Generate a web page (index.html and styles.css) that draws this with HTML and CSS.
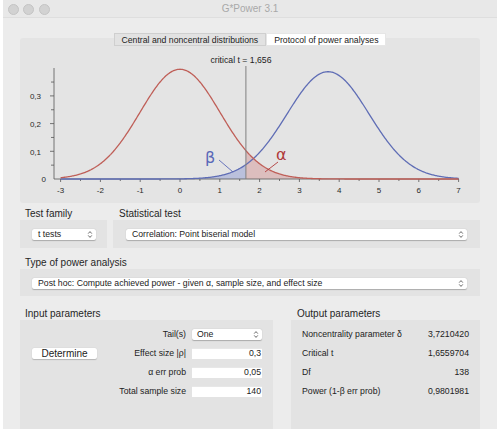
FILE: index.html
```html
<!DOCTYPE html>
<html>
<head>
<meta charset="utf-8">
<title>G*Power 3.1</title>
<link rel="stylesheet" href="styles.css">
</head>
<body>
<div class="window">
  <div class="titlebar">
    <div class="lights"><span></span><span></span><span></span></div>
    <div class="title">G*Power 3.1</div>
    <div></div>
  </div>
  <div class="content">
    <div class="tabs">
      <div class="tab">Central and noncentral distributions</div>
      <div class="tab active">Protocol of power analyses</div>
    </div>
    <div class="chart-panel">
      <svg class="chart" width="460" height="165" viewBox="20 38 460 165">
        <path id="betaFill" class="beta-fill" d=""/>
        <path id="alphaFill" class="alpha-fill" d=""/>
        <line class="axis" x1="54" y1="68" x2="54" y2="179"/>
        <line class="axis" x1="54" y1="179" x2="459" y2="179"/>
        <path id="ticks" class="axis" d=""/>
        <path id="blue" class="curve-blue" d=""/>
        <path id="red" class="curve-red" d=""/>
        <line class="crit" x1="245.9" y1="66" x2="245.9" y2="179"/>
        <text class="crit-label" x="241" y="63" text-anchor="middle">critical t = 1,656</text>
        <g class="ylabels" text-anchor="end">
          <text x="41" y="99">0,3</text>
          <text x="41" y="127">0,2</text>
          <text x="41" y="155">0,1</text>
          <text x="46" y="182">0</text>
        </g>
        <g class="xlabels" text-anchor="middle">
          <text x="60.6" y="193">-3</text>
          <text x="100.4" y="193">-2</text>
          <text x="140.2" y="193">-1</text>
          <text x="180" y="193">0</text>
          <text x="219.8" y="193">1</text>
          <text x="259.6" y="193">2</text>
          <text x="299.4" y="193">3</text>
          <text x="339.2" y="193">4</text>
          <text x="379" y="193">5</text>
          <text x="418.8" y="193">6</text>
          <text x="458.6" y="193">7</text>
        </g>
        <text class="greek beta" x="205" y="163">β</text>
        <line class="lead-beta" x1="219" y1="160" x2="233" y2="172"/>
        <text class="greek alpha" x="276" y="160">α</text>
        <line class="lead-alpha" x1="278" y1="162" x2="265" y2="172"/>
      </svg>
    </div>

    <div class="row-top">
      <div class="col col-family">
        <div class="section-label">Test family</div>
        <div class="group group-family">
          <div class="select">
            <span>t tests</span>
            <svg class="chev" width="6" height="9" viewBox="0 0 6 9"><path d="M1.2 3.6 L3 1.6 L4.8 3.6 M1.2 5.4 L3 7.4 L4.8 5.4"/></svg>
          </div>
        </div>
      </div>
      <div class="col col-stat">
        <div class="section-label label-stat">Statistical test</div>
        <div class="group group-stat">
          <div class="select">
            <span>Correlation: Point biserial model</span>
            <svg class="chev" width="6" height="9" viewBox="0 0 6 9"><path d="M1.2 3.6 L3 1.6 L4.8 3.6 M1.2 5.4 L3 7.4 L4.8 5.4"/></svg>
          </div>
        </div>
      </div>
    </div>

    <div class="section-label label-type">Type of power analysis</div>
    <div class="group group-type">
      <div class="select">
        <span>Post hoc: Compute achieved power - given α, sample size, and effect size</span>
        <svg class="chev" width="6" height="9" viewBox="0 0 6 9"><path d="M1.2 3.6 L3 1.6 L4.8 3.6 M1.2 5.4 L3 7.4 L4.8 5.4"/></svg>
      </div>
    </div>

    <div class="row-bottom">
      <div class="col col-input">
        <div class="section-label">Input parameters</div>
        <div class="group group-input">
          <div></div>
          <div class="plabel">Tail(s)</div>
          <div class="select small">
            <span>One</span>
            <svg class="chev" width="6" height="9" viewBox="0 0 6 9"><path d="M1.2 3.6 L3 1.6 L4.8 3.6 M1.2 5.4 L3 7.4 L4.8 5.4"/></svg>
          </div>

          <div class="button">Determine</div>
          <div class="plabel">Effect size |ρ|</div>
          <div class="field">0,3</div>

          <div></div>
          <div class="plabel">α err prob</div>
          <div class="field">0,05</div>

          <div></div>
          <div class="plabel">Total sample size</div>
          <div class="field">140</div>
        </div>
      </div>
      <div class="col col-output">
        <div class="section-label label-out">Output parameters</div>
        <div class="group group-output">
          <div class="olabel">Noncentrality parameter δ</div><div class="oval">3,7210420</div>
          <div class="olabel">Critical t</div><div class="oval">1,6559704</div>
          <div class="olabel">Df</div><div class="oval">138</div>
          <div class="olabel">Power (1-β err prob)</div><div class="oval">0,9801981</div>
        </div>
      </div>
    </div>
  </div>
</div>
<script src="script.js"></script>
</body>
</html>
```

FILE: styles.css
```css
html, body {
  margin: 0;
  padding: 0;
  background: #ffffff;
}

body {
  font-family: "Liberation Sans", Arial, Helvetica, sans-serif;
  color: #222222;
}

.window {
  margin-left: 3px;
  width: 494px;
  height: 429px;
  background: #ececec;
  overflow: hidden;
}

.titlebar {
  height: 18px;
  box-sizing: border-box;
  background: #e8e8e8;
  border-bottom: 1px solid #dedede;
  display: grid;
  grid-template-columns: 1fr auto 1fr;
  align-items: center;
}

.lights {
  display: flex;
  gap: 4.5px;
  padding-left: 4.5px;
}

.lights span {
  width: 9px;
  height: 9px;
  border-radius: 50%;
  background: #d2d2d2;
  border: 0.5px solid #c4c4c4;
}

.title {
  font-size: 10px;
  color: #a8a8a8;
  line-height: 18px;
}

.content {
  padding: 0 17px;
  display: flex;
  flex-direction: column;
}

.tabs {
  display: flex;
  justify-content: center;
  margin-top: 15px;
  position: relative;
  z-index: 1;
  font-size: 8.7px;
}

.tab {
  height: 13px;
  line-height: 13px;
  padding: 0 7px;
  background: #e2e2e2;
  border: 0.5px solid #cfcfcf;
  box-sizing: border-box;
  color: #222;
}

.tab.active {
  background: #ffffff;
  border-color: #e6e6e6;
}

.chart-panel {
  margin-top: -8px;
  height: 165px;
  background: #e4e4e4;
  border-radius: 3px;
}

.chart {
  display: block;
}

.axis {
  stroke: #555;
  stroke-width: 0.8;
  fill: none;
}

.curve-red {
  fill: none;
  stroke: #bf5f58;
  stroke-width: 1.3;
}

.curve-blue {
  fill: none;
  stroke: #5f6db5;
  stroke-width: 1.3;
}

.beta-fill {
  fill: rgba(110, 125, 205, 0.35);
}

.alpha-fill {
  fill: rgba(205, 120, 120, 0.35);
}

.crit {
  stroke: #808080;
  stroke-width: 1;
}

.crit-label {
  font-family: "Liberation Sans", Arial, sans-serif;
  font-size: 8.7px;
  fill: #222;
}

.ylabels text,
.xlabels text {
  font-family: "Liberation Sans", Arial, sans-serif;
  font-size: 8px;
  fill: #2a2a2a;
}

.greek {
  font-family: "DejaVu Sans", "Liberation Sans", sans-serif;
  font-size: 16px;
}

.beta {
  fill: #5a68b8;
}

.alpha {
  fill: #b03a3a;
}

.lead-beta {
  stroke: #5a68b8;
  stroke-width: 0.9;
}

.lead-alpha {
  stroke: #b03a3a;
  stroke-width: 0.9;
}

.section-label {
  font-size: 10px;
  height: 13px;
  line-height: 13px;
  padding-left: 5px;
  color: #262626;
}

.label-stat {
  padding-left: 6px;
}

.label-out {
  padding-left: 6px;
}

.row-top {
  display: flex;
  gap: 6px;
  margin-top: 4px;
}

.col-family {
  width: 87px;
}

.col-stat {
  flex: 1;
}

.group {
  background: #e3e3e3;
  box-sizing: border-box;
}

.group-family {
  height: 28px;
  padding: 9px 11px 0 12px;
}

.group-stat {
  height: 28px;
  padding: 9px 13px 0 13px;
}

.label-type {
  margin-top: 8px;
}

.group-type {
  height: 27px;
  padding: 9px 13px 0 12px;
}

.select {
  height: 11px;
  background: #ffffff;
  border-radius: 2px;
  box-shadow: 0 0.5px 1px rgba(0, 0, 0, 0.25);
  display: flex;
  align-items: center;
  justify-content: space-between;
  padding: 0 3px 0 6px;
  font-size: 8.7px;
  line-height: 11px;
  white-space: nowrap;
  overflow: hidden;
}

.select.small {
  padding-left: 5px;
}

.chev {
  flex: none;
  display: block;
}

.chev path {
  fill: none;
  stroke: #5a5a5a;
  stroke-width: 0.9;
}

.row-bottom {
  display: flex;
  gap: 18px;
  margin-top: 11px;
}

.col-input {
  width: 253px;
}

.col-output {
  width: 189px;
}

.group-input {
  height: 130px;
  padding: 9px 11px 0 12px;
  display: grid;
  grid-template-columns: 65px 1fr 70px;
  grid-auto-rows: 11px;
  column-gap: 6px;
  row-gap: 8px;
  align-content: start;
  font-size: 8.7px;
  line-height: 11px;
}

.plabel {
  text-align: right;
  white-space: nowrap;
}

.field {
  background: #ffffff;
  text-align: right;
  padding-right: 1px;
  box-shadow: inset 0 0.5px 0 #d0d0d0;
}

.button {
  background: #ffffff;
  border-radius: 2px;
  box-shadow: 0 0.5px 1px rgba(0, 0, 0, 0.2);
  text-align: center;
  font-size: 10px;
  line-height: 11px;
}

.group-output {
  height: 130px;
  padding: 9px 11px 0 11px;
  display: grid;
  grid-template-columns: 1fr auto;
  grid-auto-rows: 11px;
  row-gap: 8px;
  align-content: start;
  font-size: 8.7px;
  line-height: 11px;
}

.olabel {
  white-space: nowrap;
}

.oval {
  text-align: right;
}
```

FILE: script.js
```js
(function () {
  function X(t) { return 180 + t * 39.8; }
  function Y(f) { return 179 - f * 277; }
  function n(t, m, s) {
    return Math.exp(-0.5 * Math.pow((t - m) / s, 2)) / (s * Math.sqrt(2 * Math.PI));
  }
  function pts(m, s, a, b) {
    var r = [];
    var N = Math.max(2, Math.round((b - a) / 0.02));
    for (var i = 0; i <= N; i++) {
      var t = a + (b - a) * i / N;
      r.push(X(t).toFixed(2) + ',' + Y(n(t, m, s)).toFixed(2));
    }
    return r;
  }
  function set(id, d) {
    var el = document.getElementById(id);
    if (el) el.setAttribute('d', d);
  }
  var rm = 0, rs = 1.007, bm = 3.72, bs = 1.03, c = 1.656;
  set('red', 'M' + pts(rm, rs, -3, 7).join('L'));
  set('blue', 'M' + pts(bm, bs, -3, 7).join('L'));
  set('betaFill', 'M' + X(-3).toFixed(2) + ',179L' + pts(bm, bs, -3, c).join('L') + 'L' + X(c).toFixed(2) + ',179Z');
  set('alphaFill', 'M' + X(c).toFixed(2) + ',179L' + pts(rm, rs, c, 7).join('L') + 'L' + X(7).toFixed(2) + ',179Z');
  var d = '';
  for (var i = -6; i <= 14; i++) {
    d += 'M' + X(i / 2).toFixed(2) + ',179v' + (i % 2 === 0 ? 3 : 2);
  }
  for (var j = 1; j <= 7; j++) {
    d += 'M54,' + Y(j * 0.05).toFixed(2) + 'h-' + (j % 2 === 0 ? 4 : 3);
  }
  set('ticks', d);
})();
```
